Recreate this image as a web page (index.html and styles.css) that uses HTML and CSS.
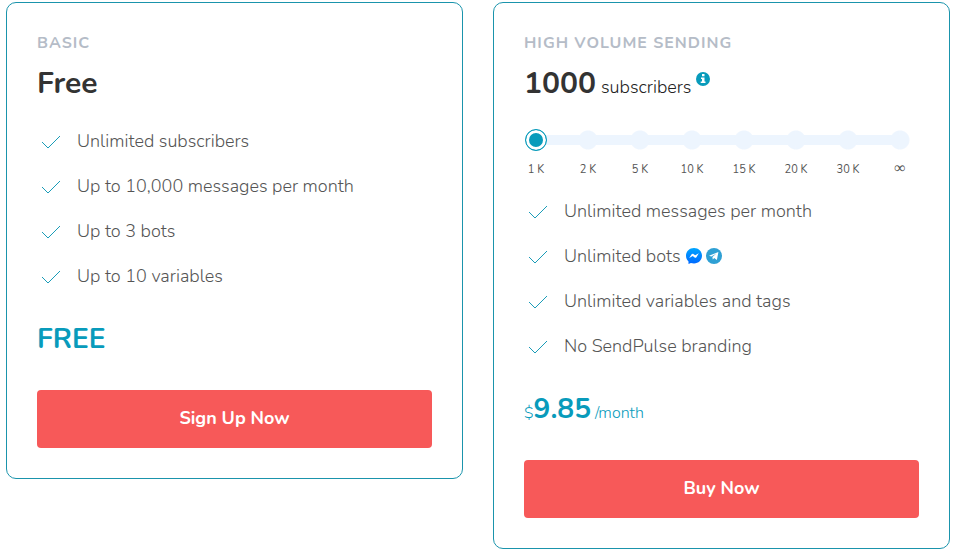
FILE: index.html
```html
<!DOCTYPE html>
<html lang="en">
<head>
    <meta charset="UTF-8">
    <meta name="viewport" content="width=device-width, initial-scale=1.0">
    <title>Pricing</title>
    <link rel="stylesheet" href="styles.css">
</head>
<body>
    <main class="plans">
        <section class="plan">
            <h2 class="plan-name">Basic</h2>
            <p class="plan-volume"><strong>Free</strong></p>
            <ul class="features">
                <li><svg class="check" viewBox="0 0 20 16"><path d="M1 8l6 6L19 2"/></svg>Unlimited subscribers</li>
                <li><svg class="check" viewBox="0 0 20 16"><path d="M1 8l6 6L19 2"/></svg>Up to 10,000 messages per month</li>
                <li><svg class="check" viewBox="0 0 20 16"><path d="M1 8l6 6L19 2"/></svg>Up to 3 bots</li>
                <li><svg class="check" viewBox="0 0 20 16"><path d="M1 8l6 6L19 2"/></svg>Up to 10 variables</li>
            </ul>
            <p class="price"><strong>FREE</strong></p>
            <button type="button" class="btn">Sign Up Now</button>
        </section>

        <section class="plan">
            <h2 class="plan-name">High volume sending</h2>
            <p class="plan-volume">
                <strong>1000</strong>
                <label for="subscribers">subscribers</label>
                <svg class="info" viewBox="0 0 14 14">
                    <circle cx="7" cy="7" r="7" fill="#089bbb"/>
                    <path d="M6 2h2.500v2.300H6zM5 5.500h3.500v4h1V11H4.700V9.500H6V7H5z" fill="#fff"/>
                </svg>
            </p>
            <div class="slider">
                <input type="range" id="subscribers" min="0" max="7" step="1" value="0">
                <ul class="slider-labels">
                    <li>1 K</li>
                    <li>2 K</li>
                    <li>5 K</li>
                    <li>10 K</li>
                    <li>15 K</li>
                    <li>20 K</li>
                    <li>30 K</li>
                    <li class="infinity">∞</li>
                </ul>
            </div>
            <ul class="features">
                <li><svg class="check" viewBox="0 0 20 16"><path d="M1 8l6 6L19 2"/></svg>Unlimited messages per month</li>
                <li>
                    <svg class="check" viewBox="0 0 20 16"><path d="M1 8l6 6L19 2"/></svg>Unlimited bots
                    <span class="bots">
                        <svg viewBox="0 0 16 16">
                            <defs>
                                <linearGradient id="messenger" x1="0" y1="0" x2="0" y2="1">
                                    <stop offset="0" stop-color="#00a5ff"/>
                                    <stop offset="1" stop-color="#0068ff"/>
                                </linearGradient>
                            </defs>
                            <path d="M8 0C3.500 0 0 3.300 0 7.700c0 2.300 1 4.300 2.500 5.700V16l2.400-1.100c1 .3 2 .5 3.100.5 4.500 0 8-3.300 8-7.700S12.500 0 8 0z" fill="url(#messenger)"/>
                            <path d="M3.200 10l2.400-3.800c.4-.6 1.200-.7 1.800-.3l1.800 1.400 3.600-2-2.400 3.900c-.4.600-1.200.7-1.800.3L6.800 8.100z" fill="#fff"/>
                        </svg>
                        <svg viewBox="0 0 16 16">
                            <circle cx="8" cy="8" r="8" fill="#2fa0d4"/>
                            <path d="M3 7.800l9.400-3.900-1.500 8.200-2.700-2-1.400 1.400-.4-2.500 4-3.500-5 3.100z" fill="#fff"/>
                        </svg>
                    </span>
                </li>
                <li><svg class="check" viewBox="0 0 20 16"><path d="M1 8l6 6L19 2"/></svg>Unlimited variables and tags</li>
                <li><svg class="check" viewBox="0 0 20 16"><path d="M1 8l6 6L19 2"/></svg>No SendPulse branding</li>
            </ul>
            <p class="price">$<strong>9.85</strong> /month</p>
            <button type="button" class="btn">Buy Now</button>
        </section>
    </main>
</body>
</html>
```
FILE: styles.css
```css
* {
    box-sizing: border-box;
}
body {
    margin: 0;
    background-color: #fff;
    font-family: Nunito, "Open Sans", sans-serif;
    color: #555;
}
h2, p, ul {
    margin: 0;
    padding: 0;
}
ul {
    list-style: none;
}
.plans {
    display: grid;
    grid-template-columns: 1fr 1fr;
    align-items: start;
    gap: 30px;
    padding: 2px 6px;
}
.plan {
    padding: 30px;
    border: 1px solid #1a94ac;
    border-radius: 10px;
}
.plan-name {
    font-size: 16px;
    line-height: 20px;
    font-weight: 700;
    letter-spacing: 1px;
    text-transform: uppercase;
    color: #b5bcc7;
}
.plan-volume {
    display: flex;
    align-items: baseline;
    gap: 5px;
    height: 36px;
    margin-top: 13px;
    font-size: 18px;
    line-height: 36px;
    font-weight: 300;
    color: #222;
}
.plan-volume strong {
    font-size: 30px;
    font-weight: 700;
    color: #333;
}
.info {
    width: 14px;
    height: 14px;
    align-self: flex-start;
    margin-top: 6px;
}

/* Subscribers slider */
.slider {
    margin: 27px 8px 11px 1px;
}
.slider input {
    display: block;
    appearance: none;
    width: 100%;
    height: 22px;
    margin: 0;
    cursor: pointer;
    background:
        radial-gradient(circle at left, #edf5fe 9px, transparent 10px) center / calc((100% - 22px) / 7) 22px,
        radial-gradient(circle at right, #edf5fe 9px, transparent 10px) center / calc((100% - 22px) / 7) 22px,
        linear-gradient(#edf5fe, #edf5fe) center / calc(100% - 22px) 10px no-repeat;
}
.slider input::-webkit-slider-thumb {
    appearance: none;
    width: 22px;
    height: 22px;
    border: 1px solid #089bbb;
    border-radius: 50%;
    background-color: #089bbb;
    box-shadow: inset 0 0 0 3px #fff;
}
.slider-labels {
    display: flex;
    justify-content: space-between;
    margin-top: 11px;
    font-size: 11px;
    line-height: 16px;
}
.slider-labels li {
    display: flex;
    justify-content: center;
    width: 22px;
    white-space: nowrap;
}
.slider-labels .infinity {
    font-family: "Liberation Serif", serif;
    font-size: 16px;
    line-height: 12px;
}

/* Feature list */
.plan-volume + .features {
    margin-top: 17px;
}
.features li {
    display: flex;
    align-items: center;
    height: 45px;
    padding-bottom: 2px;
    font-size: 18px;
    font-weight: 300;
}
.check {
    width: 20px;
    height: 16px;
    margin: 2px 16px 0 4px;
    fill: none;
    stroke: #1a9cb8;
}
.bots {
    display: flex;
    gap: 4px;
    margin-left: 5px;
}
.bots svg {
    width: 16px;
    height: 16px;
}

.price {
    height: 36px;
    margin-top: 22px;
    font-size: 16px;
    line-height: 36px;
    font-weight: 300;
    color: #089bbb;
}
.price strong {
    font-size: 28px;
    font-weight: 700;
}
.btn {
    display: block;
    width: 100%;
    height: 58px;
    margin-top: 33px;
    padding: 0 0 2px;
    border: none;
    border-radius: 4px;
    background-color: #f75959;
    color: #fff;
    font-family: inherit;
    font-size: 18px;
    font-weight: 700;
    cursor: pointer;
}
.btn:hover {
    background-color: #e94b4b;
}
```
